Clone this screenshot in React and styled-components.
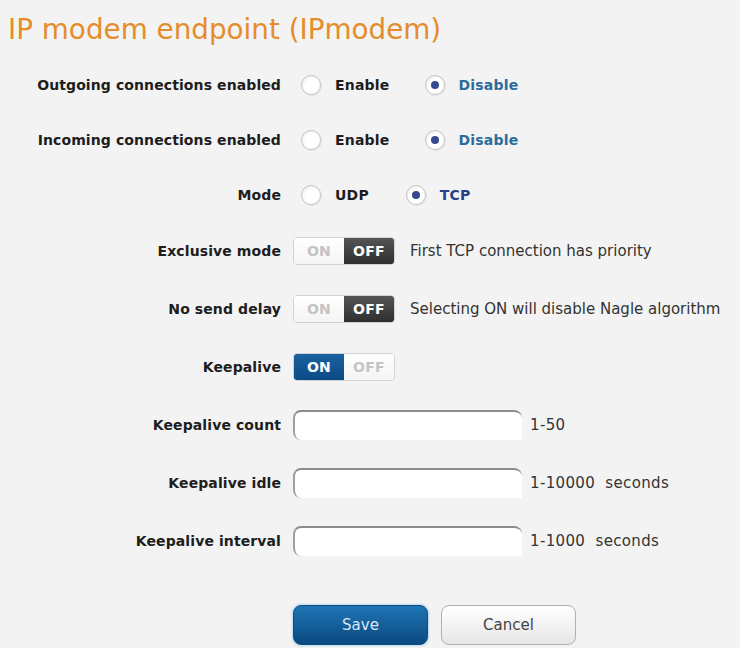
import React from "react";
import styled, { createGlobalStyle } from "styled-components";

const Global = createGlobalStyle`
  html, body {
    margin: 0;
    padding: 0;
    background: #f3f3f3;
  }
  body {
    font-family: "DejaVu Sans", Verdana, sans-serif;
    color: #222;
  }
`;

const Page = styled.div`
  width: 740px;
  height: 648px;
  overflow: hidden;
`;

const Title = styled.h1`
  margin: 0;
  padding: 14px 0 0 8px;
  height: 43px;
  line-height: 32px;
  font-family: "DejaVu Sans", Verdana, sans-serif;
  font-weight: normal;
  font-size: 27.8px;
  color: #e58d2c;
  white-space: nowrap;
`;

const Form = styled.div`
  display: grid;
  grid-template-columns: 281px 1fr;
  column-gap: 12px;
`;

const Label = styled.div`
  height: ${(p) => p.h}px;
  display: flex;
  align-items: center;
  justify-content: flex-end;
  font-weight: bold;
  font-size: 14px;
  letter-spacing: 0.1px;
  color: #1d1d1d;
  white-space: nowrap;
`;

const Control = styled.div`
  height: ${(p) => p.h}px;
  display: flex;
  align-items: center;
`;

const Radios = styled.div`
  display: flex;
  align-items: center;
  padding-left: 8px;
`;

const RadioOption = styled.label`
  display: flex;
  align-items: center;
  gap: 14px;
  margin-right: ${(p) => p.gap || 35}px;
  font-weight: bold;
  font-size: 14px;
  letter-spacing: 0.2px;
  color: ${(p) => (p.checked ? p.accent || "#2c6c9c" : "#1d1d1d")};
`;

const RadioDot = styled.span`
  width: 20px;
  height: 20px;
  border-radius: 50%;
  box-sizing: border-box;
  border: 1px solid #c4c4c4;
  background: radial-gradient(circle at 60% 60%, #ffffff 50%, #e2e2e2 100%);
  box-shadow: 1px 1px 1px rgba(0, 0, 0, 0.07);
  display: flex;
  align-items: center;
  justify-content: center;
  &::after {
    content: "";
    width: 8px;
    height: 8px;
    border-radius: 50%;
    background: #34498f;
    display: ${(p) => (p.checked ? "block" : "none")};
  }
`;

const Toggle = styled.div`
  display: flex;
  width: 102px;
  height: 28px;
  box-sizing: border-box;
  border: 1px solid #d2d2d2;
  border-radius: 4px;
  overflow: hidden;
  background: #fff;
`;

const ToggleHalf = styled.span`
  flex: 1;
  display: flex;
  align-items: center;
  justify-content: center;
  font-size: 14px;
  font-weight: bold;
  letter-spacing: 0.3px;
  color: ${(p) => (p.active ? "#ffffff" : "#c4c4c4")};
  background: ${(p) =>
    !p.active
      ? "linear-gradient(#ffffff, #f4f4f4)"
      : p.tone === "blue"
      ? "linear-gradient(#1a62a0, #0c4a85)"
      : "linear-gradient(#555555, #2e2e2e)"};
`;

const Note = styled.span`
  margin-left: 15px;
  font-size: 15px;
  color: #333;
  white-space: nowrap;
`;

const TextBox = styled.input`
  width: 229px;
  height: 30px;
  box-sizing: border-box;
  border: none;
  border-top: 2px solid #8c8c8c;
  border-left: 2px solid #a0a0a0;
  border-radius: 8px 8px 0 8px;
  background: #fff;
  outline: none;
  padding: 0 6px;
  font-family: inherit;
`;

const Hint = styled.span`
  margin-left: 8px;
  font-size: 15px;
  letter-spacing: 0.35px;
  color: #333;
  white-space: pre;
`;

const Buttons = styled.div`
  display: flex;
  gap: 13px;
  padding: 36px 0 0 293px;
`;

const Button = styled.button`
  width: 135px;
  height: 40px;
  border-radius: 8px;
  font-family: "DejaVu Sans", Verdana, sans-serif;
  font-size: 15px;
  cursor: pointer;
  ${(p) =>
    p.primary
      ? `
    border: 1px solid #0c4f86;
    background: linear-gradient(#1f74b4, #0a4a80);
    color: #d6e8f7;
    box-shadow: 0 0 3px rgba(60, 150, 220, 0.6);
  `
      : `
    border: 1px solid #b0b0b0;
    background: linear-gradient(#ffffff, #e6e6e6);
    color: #444;
  `}
`;

function Radio({ checked, label, accent, gap }) {
  return (
    <RadioOption checked={checked} accent={accent} gap={gap}>
      <RadioDot checked={checked} />
      {label}
    </RadioOption>
  );
}

function Switch({ on, tone }) {
  return (
    <Toggle>
      <ToggleHalf active={on} tone={tone}>ON</ToggleHalf>
      <ToggleHalf active={!on} tone={tone}>OFF</ToggleHalf>
    </Toggle>
  );
}

const rows = [
  {
    label: "Outgoing connections enabled",
    h: 55,
    control: (
      <Radios>
        <Radio label="Enable" />
        <Radio label="Disable" checked />
      </Radios>
    ),
  },
  {
    label: "Incoming connections enabled",
    h: 55,
    control: (
      <Radios>
        <Radio label="Enable" />
        <Radio label="Disable" checked />
      </Radios>
    ),
  },
  {
    label: "Mode",
    h: 55,
    control: (
      <Radios>
        <Radio label="UDP" gap={37} />
        <Radio label="TCP" checked accent="#23408a" />
      </Radios>
    ),
  },
  {
    label: "Exclusive mode",
    h: 58,
    control: (
      <>
        <Switch on={false} />
        <Note>First TCP connection has priority</Note>
      </>
    ),
  },
  {
    label: "No send delay",
    h: 58,
    control: (
      <>
        <Switch on={false} />
        <Note>Selecting ON will disable Nagle algorithm</Note>
      </>
    ),
  },
  {
    label: "Keepalive",
    h: 58,
    control: <Switch on tone="blue" />,
  },
  {
    label: "Keepalive count",
    h: 58,
    control: (
      <>
        <TextBox />
        <Hint>1-50</Hint>
      </>
    ),
  },
  {
    label: "Keepalive idle",
    h: 58,
    control: (
      <>
        <TextBox />
        <Hint>1-10000  seconds</Hint>
      </>
    ),
  },
  {
    label: "Keepalive interval",
    h: 57,
    control: (
      <>
        <TextBox />
        <Hint>1-1000  seconds</Hint>
      </>
    ),
  },
];

export default function App() {
  return (
    <Page>
      <Global />
      <Title>IP modem endpoint (IPmodem)</Title>
      <Form>
        {rows.map((r) => (
          <React.Fragment key={r.label}>
            <Label h={r.h}>{r.label}</Label>
            <Control h={r.h}>{r.control}</Control>
          </React.Fragment>
        ))}
      </Form>
      <Buttons>
        <Button primary>Save</Button>
        <Button>Cancel</Button>
      </Buttons>
    </Page>
  );
}
